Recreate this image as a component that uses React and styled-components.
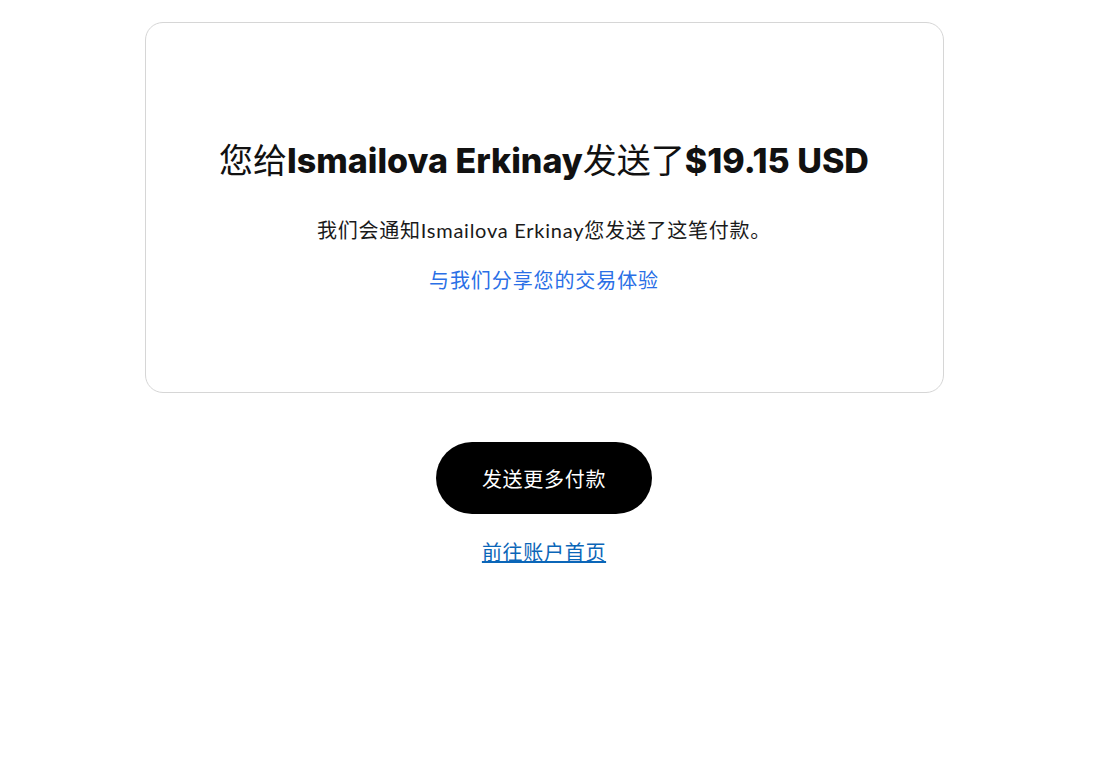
import React from "react";
import styled, { createGlobalStyle } from "styled-components";

const Global = createGlobalStyle`
  html, body { margin: 0; padding: 0; background: #fff; }
  body { font-family: Lato, "Noto Sans CJK SC", sans-serif; color: #111; }
`;

const Page = styled.main`
  display: flex;
  flex-direction: column;
  align-items: center;
  padding: 22px 6px 0 0;
`;

const Card = styled.section`
  box-sizing: border-box;
  width: 799px;
  height: 371px;
  border: 1.5px solid #d6d6d6;
  border-radius: 18px;
  display: flex;
  flex-direction: column;
  align-items: center;
  justify-content: center;
  padding-top: 18px;
`;

const Title = styled.h1`
  margin: 0;
  font-size: 34px;
  line-height: 41px;
  font-weight: 400;
  letter-spacing: 0;
  color: #111;
  white-space: nowrap;
  font-family: Inter, "Noto Sans CJK SC", sans-serif;
`;

const Strong = styled.b`
  font-weight: 800;
`;

const Note = styled.p`
  margin: 35px 0 0;
  font-size: 20px;
  line-height: 28px;
  letter-spacing: 0.75px;
  color: #1a1a1a;
`;

const CardLink = styled.a`
  margin-top: 23px;
  font-size: 20px;
  line-height: 26px;
  letter-spacing: 0.9px;
  color: #2a6fe6;
  text-decoration: none;
`;

const Primary = styled.button`
  margin-top: 49px;
  width: 216px;
  height: 72px;
  border: none;
  border-radius: 36px;
  background: #000;
  color: #fff;
  font-family: Lato, "Noto Sans CJK SC", sans-serif;
  font-size: 20px;
  letter-spacing: 0.7px;
`;

const HomeLink = styled.a`
  margin-top: 24px;
  font-size: 20px;
  line-height: 28px;
  color: #0b66b8;
  text-decoration: underline;
  letter-spacing: 0.7px;
`;

export default function App() {
  return (
    <>
      <Global />
      <Page>
        <Card>
          <Title>
            您给<Strong>Ismailova Erkinay</Strong>发送了<Strong>$19.15 USD</Strong>
          </Title>
          <Note>我们会通知Ismailova Erkinay您发送了这笔付款。</Note>
          <CardLink href="#">与我们分享您的交易体验</CardLink>
        </Card>
        <Primary>发送更多付款</Primary>
        <HomeLink href="#">前往账户首页</HomeLink>
      </Page>
    </>
  );
}
